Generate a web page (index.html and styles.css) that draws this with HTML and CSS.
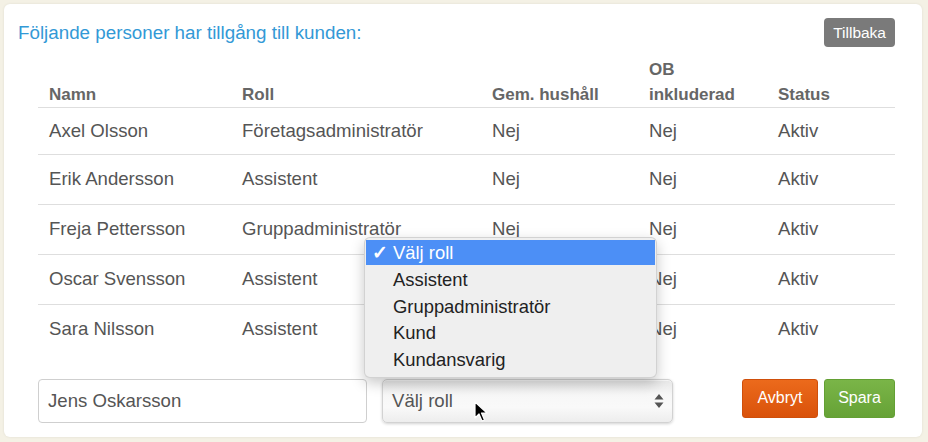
FILE: index.html
```html
<!DOCTYPE html>
<html lang="sv">
<head>
<meta charset="utf-8">
<title>Tillgång</title>
<link rel="stylesheet" href="styles.css">
</head>
<body>
<div class="card">
  <div class="top">
    <h1 class="title">Följande personer har tillgång till kunden:</h1>
    <button class="btn btn-back">Tillbaka</button>
  </div>
  <table class="people">
    <colgroup>
      <col class="c1"><col class="c2"><col class="c3"><col class="c4"><col class="c5">
    </colgroup>
    <thead>
      <tr><th>Namn</th><th>Roll</th><th>Gem. hushåll</th><th>OB<br>inkluderad</th><th>Status</th></tr>
    </thead>
    <tbody>
      <tr><td>Axel Olsson</td><td>Företagsadministratör</td><td>Nej</td><td>Nej</td><td>Aktiv</td></tr>
      <tr><td>Erik Andersson</td><td>Assistent</td><td>Nej</td><td>Nej</td><td>Aktiv</td></tr>
      <tr><td>Freja Pettersson</td><td>Gruppadministratör</td><td>Nej</td><td>Nej</td><td>Aktiv</td></tr>
      <tr><td>Oscar Svensson</td><td>Assistent</td><td>Nej</td><td>Nej</td><td>Aktiv</td></tr>
      <tr><td>Sara Nilsson</td><td>Assistent</td><td>Nej</td><td>Nej</td><td>Aktiv</td></tr>
    </tbody>
  </table>
  <div class="form">
    <div class="input">Jens Oskarsson</div>
    <div class="select">
      <span>Välj roll</span>
      <svg class="arrows" width="10" height="16" viewBox="0 0 10 16"><path d="M5 1 L9.5 6.5 H0.5 Z M5 15 L9.5 9.5 H0.5 Z" fill="#555"/></svg>
    </div>
    <div class="actions">
      <button class="btn btn-cancel">Avbryt</button>
      <button class="btn btn-save">Spara</button>
    </div>
  </div>
  <ul class="menu">
    <li class="sel"><span class="check">✓</span>Välj roll</li>
    <li>Assistent</li>
    <li>Gruppadministratör</li>
    <li>Kund</li>
    <li>Kundansvarig</li>
  </ul>
  <svg class="cursor" width="14" height="22" viewBox="0 0 14 22"><path d="M1 1 L1 17 L5 13 L8 20 L10.5 19 L7.5 12 L13 12 Z" fill="#000" stroke="#fff" stroke-width="1.2" stroke-linejoin="round"/></svg>
</div>
</body>
</html>
```
FILE: styles.css
```css
html, body {
  margin: 0;
  padding: 0;
}
body {
  background: #f4f1e5;
  font-family: "Liberation Sans", Arial, Helvetica, sans-serif;
  width: 928px;
  height: 442px;
  overflow: hidden;
}
.card {
  position: relative;
  box-sizing: border-box;
  margin: 4px 0 0 4px;
  width: 918px;
  height: 433px;
  background: #fff;
  border-radius: 6px;
  box-shadow: 0 0 3px rgba(0, 0, 0, 0.08);
  padding: 14px 27px 0 14px;
}
.top {
  display: flex;
  justify-content: space-between;
  align-items: flex-start;
  height: 29px;
}
.title {
  margin: 0;
  font-weight: normal;
  font-size: 18.8px;
  line-height: 29px;
  color: #3399d6;
}
.btn {
  font-family: inherit;
  color: #fff;
  border: 1px solid transparent;
  border-radius: 4px;
  cursor: pointer;
  padding: 0;
}
.btn-back {
  height: 29px;
  padding: 0 8px;
  background: #7a7a7a;
  font-size: 15.5px;
}
.people {
  margin-left: 20px;
  width: 857px;
  border-collapse: collapse;
  table-layout: fixed;
}
.c1 { width: 193px; }
.c2 { width: 250px; }
.c3 { width: 157px; }
.c4 { width: 129px; }
.c5 { width: 128px; }
.people th {
  text-align: left;
  vertical-align: bottom;
  font-size: 17px;
  line-height: 25px;
  color: #666;
  font-weight: bold;
  height: 60px;
  padding: 0 0 0 11px;
  border-bottom: 1px solid #dedede;
  box-sizing: border-box;
}
.people td {
  font-size: 18.6px;
  color: #555;
  padding: 0 0 0 11px;
  height: 49px;
  border-top: 1px solid #dedede;
  white-space: nowrap;
  overflow: hidden;
}
.people tbody tr:first-child td {
  height: 46px;
  border-top: none;
}
.form {
  display: flex;
  align-items: flex-start;
  margin: 25px 0 0 20px;
  width: 857px;
}
.input {
  box-sizing: border-box;
  width: 329px;
  height: 44px;
  border: 1px solid #cfcfcf;
  border-radius: 4px;
  padding-left: 9px;
  font-size: 18.6px;
  line-height: 42px;
  color: #555;
}
.select {
  box-sizing: border-box;
  margin-left: 15px;
  width: 291px;
  height: 44px;
  border-radius: 5px;
  border: 1px solid #d2d2d2;
  background: linear-gradient(#e6e6e6, #f7f7f7 35%, #f9f9f9 65%, #ededed);
  box-shadow: 0 1px 3px rgba(0, 0, 0, 0.18), inset 0 1px 0 rgba(255,255,255,0.6);
  display: flex;
  align-items: center;
  justify-content: space-between;
  padding: 0 8px 0 9px;
  font-size: 18.6px;
  color: #555;
}
.arrows {
  display: block;
}
.actions {
  margin-left: auto;
  display: flex;
  gap: 6px;
}
.btn-cancel, .btn-save {
  height: 39px;
  font-size: 16px;
  border-radius: 3px;
}
.btn-cancel {
  width: 76px;
  background: linear-gradient(#ec6a1c, #d9520a);
  border-color: #cf4f0b;
}
.btn-save {
  width: 71px;
  background: linear-gradient(#7ab548, #66a236);
  border-color: #63a034;
}
.menu {
  position: absolute;
  left: 360px;
  top: 233px;
  box-sizing: border-box;
  width: 293px;
  height: 141px;
  margin: 0;
  padding: 2px 1px 0 1px;
  list-style: none;
  background: #efefef;
  border: 1px solid rgba(0, 0, 0, 0.12);
  border-radius: 6px;
  box-shadow: 0 5px 14px rgba(0, 0, 0, 0.22);
}
.menu li {
  position: relative;
  height: 26.8px;
  line-height: 26px;
  padding-left: 27px;
  font-size: 18.4px;
  color: #222;
}
.menu li.sel {
  background: #4c8ff6;
  color: #fff;
  height: 25px;
  line-height: 25px;
  margin-bottom: 1.8px;
}
.check {
  position: absolute;
  left: 6px;
  top: 0;
  font-size: 19px;
  font-weight: bold;
}
.cursor {
  position: absolute;
  left: 470px;
  top: 397px;
}
```
